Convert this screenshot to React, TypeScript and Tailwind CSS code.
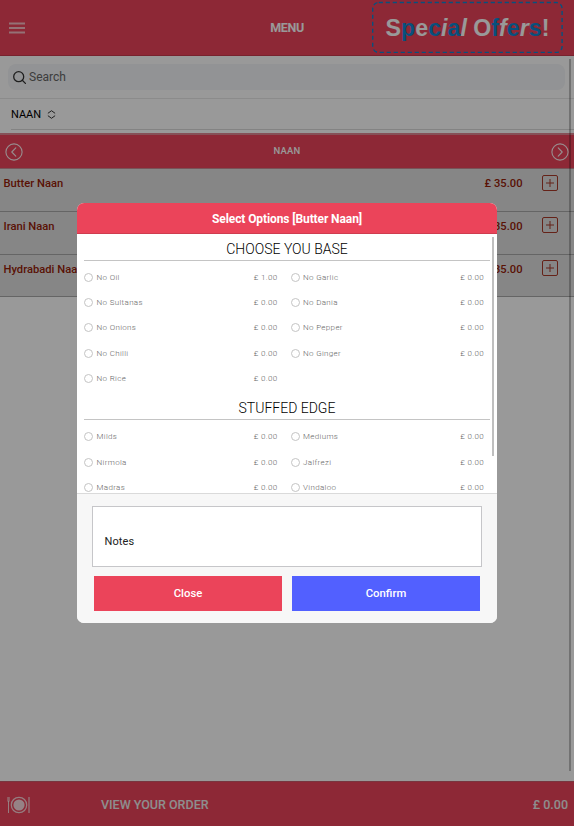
import React from "react";

type Option = { name: string; price: string };

const base: Option[] = [
  { name: "No Oil", price: "1.00" },
  { name: "No Garlic", price: "0.00" },
  { name: "No Sultanas", price: "0.00" },
  { name: "No Dania", price: "0.00" },
  { name: "No Onions", price: "0.00" },
  { name: "No Pepper", price: "0.00" },
  { name: "No Chilli", price: "0.00" },
  { name: "No Ginger", price: "0.00" },
  { name: "No Rice", price: "0.00" },
];

const edge: Option[] = [
  { name: "Milds", price: "0.00" },
  { name: "Mediums", price: "0.00" },
  { name: "Nirmola", price: "0.00" },
  { name: "Jalfrezi", price: "0.00" },
  { name: "Madras", price: "0.00" },
  { name: "Vindaloo", price: "0.00" },
];

const offerLetters: { ch: string; cls: string }[] = [
  { ch: "S", cls: "text-white" },
  { ch: "p", cls: "text-[#0e86d0]" },
  { ch: "e", cls: "text-white" },
  { ch: "c", cls: "text-[#0e86d0]" },
  { ch: "i", cls: "text-white italic" },
  { ch: "a", cls: "text-[#0e86d0]" },
  { ch: "l", cls: "text-white italic" },
  { ch: "\u00a0", cls: "text-white" },
  { ch: "O", cls: "text-white" },
  { ch: "f", cls: "text-[#0e86d0]" },
  { ch: "f", cls: "text-white italic" },
  { ch: "e", cls: "text-[#0e86d0]" },
  { ch: "r", cls: "text-white italic" },
  { ch: "s", cls: "text-[#0e86d0]" },
  { ch: "!", cls: "text-white" },
];

function Header() {
  return (
    <header className="relative flex h-14 items-center justify-between border-b border-[#c83a4d] bg-[#eb445a]">
      <svg className="ml-[9px] h-3 w-4" viewBox="0 0 16 12" fill="none" stroke="#fff" strokeOpacity="0.65" strokeWidth="1.8">
        <path d="M0 1.5h16M0 6h16M0 10.5h16" />
      </svg>
      <span className="absolute left-0 top-[19px] w-full text-center text-[12.5px] font-bold leading-[18px] tracking-[-0.4px] text-white">
        MENU
      </span>
      <div className="relative mb-px mr-[11px] flex h-[52px] w-[191px] items-center justify-center pt-[3px] font-['Liberation_Sans',sans-serif] text-[23.2px] font-bold leading-none">
        <svg className="absolute inset-0 h-full w-full" viewBox="0 0 191 52" fill="none">
          <rect x="0.7" y="1.5" width="189.4" height="50" rx="6" stroke="#0e86d0" strokeWidth="1.4" strokeDasharray="4.2 2.8" />
        </svg>
        <span className="whitespace-nowrap">
          {offerLetters.map((l, i) => (
            <span key={i} className={l.cls}>{l.ch}</span>
          ))}
        </span>
      </div>
    </header>
  );
}

function Filters() {
  return (
    <>
      <div className="flex h-[43px] border-b border-[#e8e8e8] px-2 pt-2">
        <div className="mr-px flex h-[26px] flex-1 items-center rounded-lg bg-[#f3f5f8] pl-[5px]">
          <svg className="h-[13px] w-[13px]" viewBox="0 0 13 13" fill="none" stroke="#333" strokeWidth="1.3" strokeLinecap="round">
            <circle cx="5.7" cy="5.7" r="5" />
            <path d="M9.3 9.3 12.4 12.4" />
          </svg>
          <span className="ml-[3px] text-[12px] text-[#666]">Search</span>
        </div>
      </div>
      <div className="ml-[11px] flex h-[31px] items-center border-b border-[#dadada] text-[11px] text-black">
        <span className="pt-[2px]">NAAN</span>
        <svg className="ml-[6px] h-[9px] w-[9px]" viewBox="0 0 9 9" fill="none" stroke="#333" strokeWidth="1" strokeLinecap="round" strokeLinejoin="round">
          <path d="M1.2 3.1 4.5.7 7.8 3.1M1.2 5.9 4.5 8.3 7.8 5.9" />
        </svg>
      </div>
    </>
  );
}

function Chevron({ d }: { d: string }) {
  return (
    <svg className="h-[18px] w-[18px]" viewBox="0 0 18 18" fill="none" stroke="#fff" strokeOpacity="0.9" strokeWidth="1.1">
      <circle cx="9" cy="9" r="8.1" />
      <path d={d} strokeLinecap="round" strokeLinejoin="round" />
    </svg>
  );
}

function Dishes() {
  return (
    <div className="mt-[3px]">
      <div className="flex h-9 items-center justify-between border-b border-t-2 border-b-[#c98a93] border-t-[#df8692] bg-[#eb445a] pl-[5px] pr-[5px] pt-px">
        <Chevron d="M10.8 4.8 6.8 9 10.8 13.2" />
        <span className="mb-[2px] text-[9.5px] font-medium tracking-[0.2px] text-white">NAAN</span>
        <Chevron d="M7.2 4.8 11.2 9 7.2 13.2" />
      </div>
      {["Butter Naan", "Irani Naan", "Hydrabadi Naan"].map((name) => (
        <div key={name} className="flex h-[42.8px] items-start border-b border-[#a8a8a8] bg-[#e0e0e0] pl-[3.5px] pt-[6px] text-[11.2px] font-medium leading-[17px] text-[#962008]">
          <span className="flex-1">{name}</span>
          <span className="mr-[19.5px]">£ 35.00</span>
          <svg className="-mt-[0.4px] mr-4 h-4 w-4" viewBox="0 0 16 16" fill="none" stroke="#a83a28" strokeWidth="1">
            <rect x="0.5" y="0.5" width="15" height="15" rx="1.5" />
            <path d="M8 4v8M4 8h8" />
          </svg>
        </div>
      ))}
    </div>
  );
}

function OrderBar() {
  return (
    <footer className="mt-auto flex h-[45px] items-center border-t border-[#c85a6a] bg-[#eb445a] pb-0.5 text-[12.5px] font-medium text-[#ededed]">
      <svg className="ml-[7px] mt-[3px] h-[18px] w-[24px]" viewBox="0 0 24 18" fill="none" stroke="#fff" strokeOpacity="0.75">
        <circle cx="12" cy="9" r="7.7" strokeWidth="1.3" />
        <circle cx="12" cy="9" r="5.6" fill="#fff" fillOpacity="0.8" stroke="none" />
        <path d="M1.5 5v12" strokeWidth="1" />
        <path d="M.6 1v4.3h1.8V1M1.5 1v4" strokeWidth="0.6" />
        <path d="M22 1v16" strokeWidth="1.2" />
      </svg>
      <span className="ml-[70px] mt-[4px] flex-1">VIEW YOUR ORDER</span>
      <span className="mr-[6px] mt-[4px]">£ 0.00</span>
    </footer>
  );
}

function OptionGroup({ title, options }: { title: string; options: Option[] }) {
  return (
    <section>
      <h2 className="mx-[7px] flex h-[27px] items-end justify-center border-b border-[#c4c4c4] pb-px text-[14px] font-light leading-[19px] text-black">
        {title}
      </h2>
      <div className="grid grid-cols-2 pl-[7px] pt-1">
        {options.map((o) => (
          <label key={o.name} className="flex h-[25.2px] items-center text-[8px] font-light tracking-[0.34px] text-[#666]">
            <span className="h-[9px] w-[9px] rounded-full border border-[#c4c4c4]" />
            <span className="ml-[3.5px] flex-1 pt-[0.8px]">{o.name}</span>
            <span className="mr-[13px] pt-[0.8px]">£ {o.price}</span>
          </label>
        ))}
      </div>
    </section>
  );
}

function OptionsModal() {
  return (
    <div className="absolute inset-0 flex items-center justify-center bg-black/40">
      <div role="dialog" className="flex h-[420px] w-[420px] flex-col overflow-hidden rounded-[7px] bg-white">
        <div className="flex h-[31px] items-center justify-center border-b border-[#cf3c4f] bg-[#eb445a] pt-px text-[12px] font-bold tracking-[-0.1px] text-white">
          Select Options [Butter Naan]
        </div>
        <div className="relative h-[259px] overflow-hidden">
          <OptionGroup title="CHOOSE YOU BASE" options={base} />
          <div className="h-[2.4px]" />
          <OptionGroup title="STUFFED EDGE" options={edge} />
          <div className="absolute right-[3px] top-[3px] h-[219px] w-[2px] bg-[#bfbfbf]" />
        </div>
        <div className="flex-1 border-t border-[#dadada] bg-[#f7f7f7] px-[15px] pt-3">
          <div className="flex h-[61px] items-center border border-[#c6c6c9] bg-white pl-[11.5px] pt-[11px] text-[11px] tracking-[0.1px] text-[#222]">
            Notes
          </div>
          <div className="mt-[9px] flex gap-[10px] px-[2px] text-[11.3px] font-medium text-white">
            <button className="h-[35px] w-[188px] bg-[#eb445a] pt-px">Close</button>
            <button className="h-[35px] w-[188px] bg-[#5260ff] pt-px">Confirm</button>
          </div>
        </div>
      </div>
    </div>
  );
}

export default function App() {
  return (
    <div className="relative flex h-[826px] w-[574px] flex-col overflow-hidden bg-white font-['Roboto',sans-serif]">
      <Header />
      <Filters />
      <Dishes />
      <OrderBar />
      <div className="absolute right-[3px] top-[59px] h-[712px] w-[2px] bg-black/25" />
      <OptionsModal />
    </div>
  );
}
